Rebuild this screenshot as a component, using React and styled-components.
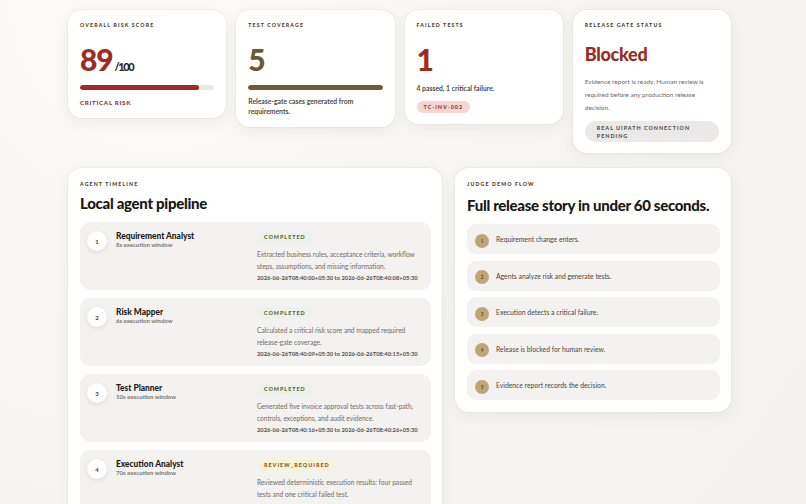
import React from 'react'
import styled, { createGlobalStyle } from 'styled-components'

const GlobalStyle = createGlobalStyle`
html, body {
  margin: 0;
  background: #f5f4f1;
}
body {
  font-family: Lato, "Noto Sans", sans-serif;
  color: #1f1d1b;
}
* { box-sizing: border-box; }
`

// app shell owns the scrollbar so it keeps the dark chrome
const Shell = styled.div`
height: 100vh;
overflow-y: scroll;
color-scheme: dark;
background: radial-gradient(circle at 20% 0%, #fbfaf8 0%, #f6f5f2 55%, #f3f2ef 100%);

&::-webkit-scrollbar {
  width: 15px;
  background: #2b2b2b;
}
&::-webkit-scrollbar-thumb {
  background: #9b9b9b;
  border: 4px solid #2b2b2b;
  border-radius: 8px;
}
`

const Page = styled.div`
width: 731px;
padding: 10px 0 30px 68px;
`

const StatsRow = styled.div`
display: grid;
grid-template-columns: repeat(4, 1fr);
gap: 10px;
align-items: start;
`

const Card = styled.div`
background: #ffffff;
border-radius: 14px;
padding: 11px 12px 11px;
box-shadow: 0 4px 14px rgba(70, 55, 35, 0.07), 0 0 0 1px rgba(60, 50, 40, 0.04);
`

const Eyebrow = styled.div`
font-size: 5.2px;
line-height: 8px;
font-weight: 900;
letter-spacing: 1.15px;
text-transform: uppercase;
color: #4f402a;
`

const BigValue = styled.div`
margin-top: 15px;
font-size: 30px;
font-weight: 900;
line-height: 30px;
letter-spacing: -1.2px;
color: ${p => p.color};
display: flex;
align-items: baseline;
gap: 2px;
`

const OutOf = styled.span`
font-size: 11px;
line-height: 12px;
font-weight: 900;
letter-spacing: -1.4px;
color: #2a2724;
`

const StatusWord = styled.div`
margin-top: 16px;
font-size: 18px;
line-height: 18px;
font-weight: 900;
letter-spacing: -0.3px;
color: #9c2a24;
`

const Track = styled.div`
margin-top: 11px;
height: 5px;
border-radius: 3px;
background: #ebe8e4;
overflow: hidden;
`

const Fill = styled.div`
height: 100%;
border-radius: 3px;
background: ${p => p.color};
`

const RiskTag = styled.div`
margin-top: 8px;
font-size: 6.2px;
line-height: 9px;
font-weight: 900;
letter-spacing: 0.7px;
color: #a1302a;
`

const Note = styled.p`
margin: ${p => p.mt || 6}px 0 0;
font-size: 6.8px;
line-height: 10px;
font-weight: 700;
color: #4f4b47;
`

const Body = styled.p`
margin: 12px 0 0;
font-size: 6.5px;
line-height: 13px;
color: #6f6b67;
`

const Chip = styled.span`
display: ${p => (p.wide ? 'block' : 'inline-block')};
margin-top: ${p => p.mt ?? 7}px;
padding: ${p => (p.wide ? '3px 12px 2px' : '2px 7px')};
border-radius: 99px;
font-size: 5.4px;
line-height: 8px;
font-weight: 900;
letter-spacing: 1px;
text-transform: uppercase;
background: ${p => p.bg};
color: ${p => p.fg};
`

const Columns = styled.div`
margin-top: 15px;
display: grid;
grid-template-columns: 374px 276px;
gap: 13px;
align-items: start;
`

const Panel = styled.section`
background: #ffffff;
border-radius: 14px;
padding: 12px 11px 12px 12px;
box-shadow: 0 4px 14px rgba(70, 55, 35, 0.07), 0 0 0 1px rgba(60, 50, 40, 0.04);
`

const PanelTitle = styled.h2`
margin: ${p => p.mt || 6}px 0 10px;
font-size: 15px;
line-height: 18px;
font-weight: 900;
letter-spacing: -0.3px;
white-space: nowrap;
color: #1a1816;
`

const StepList = styled.div`
display: flex;
flex-direction: column;
gap: 8px;
`

const Step = styled.div`
display: grid;
grid-template-columns: 170px 1fr;
padding: 9px 9px 8px 7px;
border-radius: 10px;
background: #f3f2f0;
`

const StepHead = styled.div`
display: flex;
gap: 9px;
align-items: flex-start;
`

const StepNum = styled.div`
width: 20px;
height: 20px;
flex: none;
border-radius: 50%;
background: #ffffff;
box-shadow: 0 1px 4px rgba(60, 50, 40, 0.12);
display: flex;
align-items: center;
justify-content: center;
font-size: 6px;
font-weight: 700;
color: #4a4540;
`

const StepName = styled.div`
font-size: 8.4px;
line-height: 10px;
font-weight: 900;
color: #1d1b19;
`

const StepSub = styled.div`
font-size: 6px;
line-height: 8px;
font-weight: 700;
color: #7a7570;
`

const StepDetail = styled.div`
display: flex;
flex-direction: column;
align-items: flex-start;
`

const StepText = styled.p`
margin: 5px 0 0;
font-size: 6.6px;
line-height: 12px;
color: #6f6b67;
`

const Stamp = styled.div`
margin-top: 2px;
font-size: 5.8px;
line-height: 8px;
font-weight: 700;
color: #55514c;
`

const FlowList = styled.div`
display: flex;
flex-direction: column;
gap: 6.5px;
`

const FlowItem = styled.div`
height: 30px;
display: flex;
align-items: center;
gap: 7px;
padding: 0 8px;
border-radius: 9px;
background: #f3f2f0;
`

const FlowDot = styled.span`
width: 14px;
height: 14px;
flex: none;
margin-top: 3px;
border-radius: 50%;
background: #bea67a;
display: flex;
align-items: center;
justify-content: center;
font-size: 4.6px;
font-weight: 700;
color: #5a4a30;
`

const FlowText = styled.span`
font-size: 6.8px;
color: #4a4643;
`

const tones = {
  COMPLETED: { bg: '#edf1ea', fg: '#4c6b43' },
  REVIEW_REQUIRED: { bg: '#fbf1d8', fg: '#7d5d1e' },
}

const steps = [
  {
    name: 'Requirement Analyst',
    window: '8s execution window',
    status: 'COMPLETED',
    text: 'Extracted business rules, acceptance criteria, workflow steps, assumptions, and missing information.',
    from: '2026-06-26T08:40:00+05:30',
    to: '2026-06-26T08:40:08+05:30',
  },
  {
    name: 'Risk Mapper',
    window: '6s execution window',
    status: 'COMPLETED',
    text: 'Calculated a critical risk score and mapped required release-gate coverage.',
    from: '2026-06-26T08:40:09+05:30',
    to: '2026-06-26T08:40:15+05:30',
  },
  {
    name: 'Test Planner',
    window: '10s execution window',
    status: 'COMPLETED',
    text: 'Generated five invoice approval tests across fast-path, controls, exceptions, and audit evidence.',
    from: '2026-06-26T08:40:16+05:30',
    to: '2026-06-26T08:40:26+05:30',
  },
  {
    name: 'Execution Analyst',
    window: '70s execution window',
    status: 'REVIEW_REQUIRED',
    text: 'Reviewed deterministic execution results: four passed tests and one critical failed test.',
    from: '2026-06-26T08:40:30+05:30',
    to: '2026-06-26T08:41:40+05:30',
  },
]

const flow = [
  'Requirement change enters.',
  'Agents analyze risk and generate tests.',
  'Execution detects a critical failure.',
  'Release is blocked for human review.',
  'Evidence report records the decision.',
]

export default function App() {
  const riskScore = 89

  return (
    <>
      <GlobalStyle />
      <Shell>
        <Page>
          <StatsRow>
            <Card>
              <Eyebrow>Overall risk score</Eyebrow>
              <BigValue color="#9e2a24">
                {riskScore}
                <OutOf>/100</OutOf>
              </BigValue>
              <Track>
                <Fill color="#a3282a" style={{ width: `${riskScore}%` }} />
              </Track>
              <RiskTag>CRITICAL RISK</RiskTag>
            </Card>

            <Card>
              <Eyebrow>Test coverage</Eyebrow>
              <BigValue color="#6b5837">5</BigValue>
              <Track>
                <Fill color="#6e5b3a" style={{ width: '100%' }} />
              </Track>
              <Note>Release-gate cases generated from requirements.</Note>
            </Card>

            <Card>
              <Eyebrow>Failed tests</Eyebrow>
              <BigValue color="#9e2a24">1</BigValue>
              <Note mt={9}>4 passed, 1 critical failure.</Note>
              <Chip bg="#f6d6d2" fg="#a2302a">TC-INV-002</Chip>
            </Card>

            <Card>
              <Eyebrow>Release gate status</Eyebrow>
              <StatusWord>Blocked</StatusWord>
              <Body>
                Evidence report is ready. Human review is required before any production release decision.
              </Body>
              <Chip wide mt={7} bg="#ebe9e7" fg="#55514c">
                Real UiPath connection pending
              </Chip>
            </Card>
          </StatsRow>

          <Columns>
            <Panel>
              <Eyebrow>Agent timeline</Eyebrow>
              <PanelTitle>Local agent pipeline</PanelTitle>
              <StepList>
                {steps.map((s, i) => (
                  <Step key={s.name}>
                    <StepHead>
                      <StepNum>{i + 1}</StepNum>
                      <div>
                        <StepName>{s.name}</StepName>
                        <StepSub>{s.window}</StepSub>
                      </div>
                    </StepHead>
                    <StepDetail>
                      <Chip mt={0} bg={tones[s.status].bg} fg={tones[s.status].fg}>
                        {s.status}
                      </Chip>
                      <StepText>{s.text}</StepText>
                      <Stamp>
                        {s.from} to {s.to}
                      </Stamp>
                    </StepDetail>
                  </Step>
                ))}
              </StepList>
            </Panel>

            <Panel>
              <Eyebrow>Judge demo flow</Eyebrow>
              <PanelTitle mt={8}>Full release story in under 60 seconds.</PanelTitle>
              <FlowList>
                {flow.map((text, i) => (
                  <FlowItem key={text}>
                    <FlowDot>{i + 1}</FlowDot>
                    <FlowText>{text}</FlowText>
                  </FlowItem>
                ))}
              </FlowList>
            </Panel>
          </Columns>
        </Page>
      </Shell>
    </>
  )
}
